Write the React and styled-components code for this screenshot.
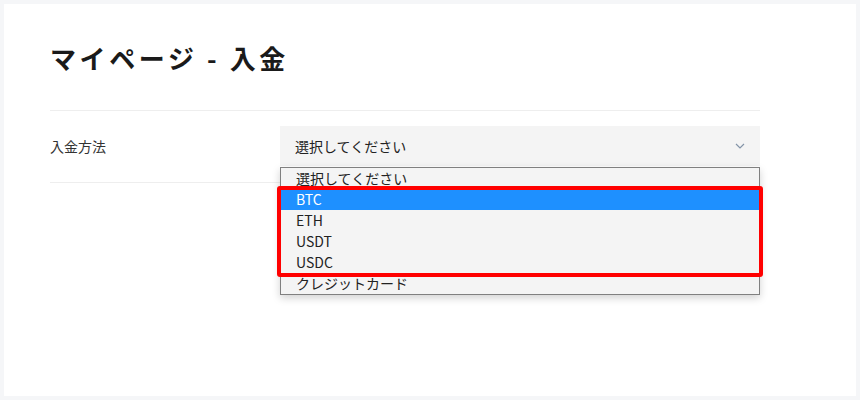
import React from 'react';
import styled, { createGlobalStyle } from 'styled-components';

const GlobalStyle = createGlobalStyle`
  html, body {
    margin: 0;
    padding: 0;
    background: #f5f6f8;
    font-family: "Noto Sans CJK JP", "Noto Sans", sans-serif;
  }
`;

const options = ['選択してください', 'BTC', 'ETH', 'USDT', 'USDC', 'クレジットカード'];

function App() {
  const selected = 'BTC';

  return (
    <>
      <GlobalStyle />
      <Card>
        <Title>マイページ - 入金</Title>
        <Form>
          <FormRow>
            <Label>入金方法</Label>
            <SelectBox>
              <span>選択してください</span>
              <Chevron width="10" height="6" viewBox="0 0 10 6">
                <path d="M1 1l4 4 4-4" fill="none" stroke="#8494a8" strokeWidth="1.2" />
              </Chevron>
              <OptionList>
                {options.map((opt) => (
                  <Option key={opt} $active={opt === selected}>{opt}</Option>
                ))}
                <Highlight />
              </OptionList>
            </SelectBox>
          </FormRow>
        </Form>
      </Card>
    </>
  );
}

const Card = styled.main`
  margin: 4px;
  height: 392px;
  box-sizing: border-box;
  background: #fff;
  padding: 36px 96px 0 46px;
`;

const Title = styled.h1`
  margin: 0 0 34px;
  font-size: 26px;
  line-height: 36px;
  font-weight: 700;
  letter-spacing: 3.6px;
  color: #1a1a1a;
`;

const Form = styled.div`
  border-top: 1px solid #eeeeee;
`;

const FormRow = styled.div`
  display: flex;
  align-items: center;
  padding: 15px 0 16px;
  border-bottom: 1px solid #eeeeee;
`;

const Label = styled.div`
  width: 230px;
  font-size: 14px;
  color: #333;
`;

const SelectBox = styled.div`
  position: relative;
  flex: 1;
  height: 40px;
  box-sizing: border-box;
  padding: 0 15px;
  display: flex;
  align-items: center;
  justify-content: space-between;
  background: #f4f4f4;
  font-size: 14px;
  color: #222;
`;

const Chevron = styled.svg`
  margin-right: 0;
`;

const OptionList = styled.ul`
  position: absolute;
  top: 41px;
  left: 0;
  width: 100%;
  box-sizing: border-box;
  margin: 0;
  padding: 0;
  list-style: none;
  background: #f4f4f4;
  border: 1px solid #808080;
  box-shadow: 0 3px 8px rgba(0, 0, 0, 0.18);
  z-index: 10;
`;

const Option = styled.li`
  height: 21px;
  line-height: 21px;
  padding: 0 15px;
  font-size: 14px;
  color: ${(p) => (p.$active ? '#fff' : '#222')};
  background: ${(p) => (p.$active ? '#1e90ff' : 'transparent')};
`;

const Highlight = styled.div`
  position: absolute;
  top: 18px;
  left: -4px;
  width: 486px;
  height: 91px;
  box-sizing: border-box;
  border: 4px solid #ff0000;
  border-radius: 3px;
  pointer-events: none;
`;

export default App;
